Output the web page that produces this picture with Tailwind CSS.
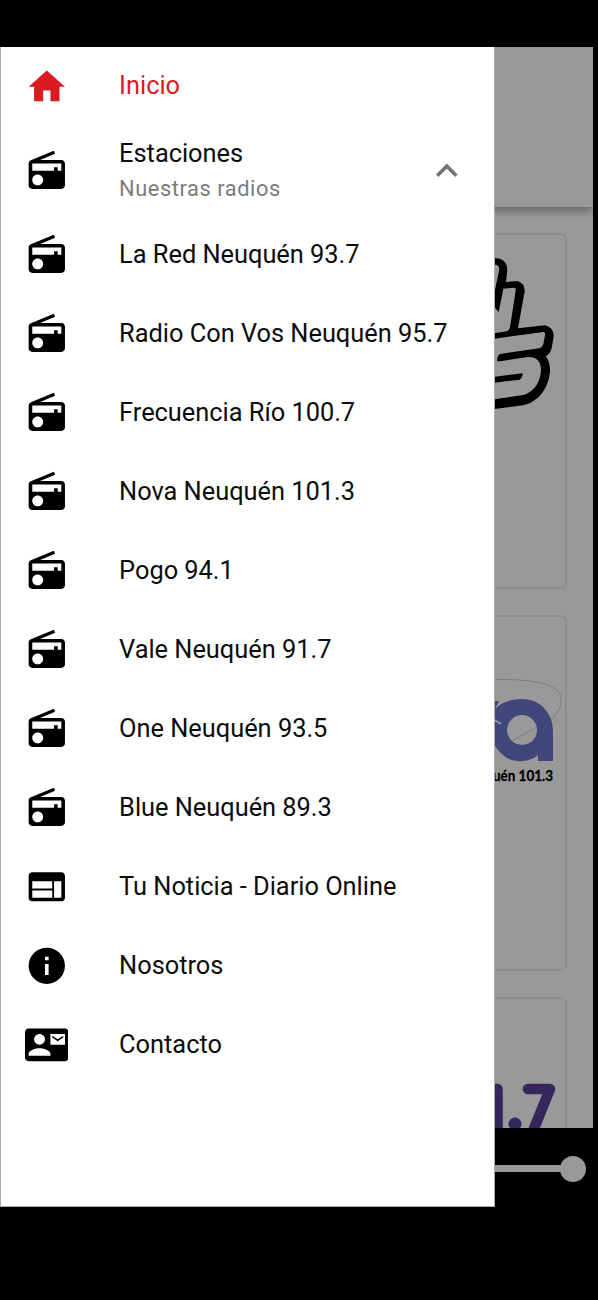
<!DOCTYPE html>
<html lang="es">
<head>
<meta charset="utf-8">
<meta name="viewport" content="width=device-width, initial-scale=1">
<title>Radios</title>
<script src="https://cdn.jsdelivr.net/npm/@tailwindcss/browser@4"></script>
</head>
<body class="bg-black">
<svg class="hidden">
  <symbol id="radio" viewBox="0 0 24 24"><path d="M3.24 6.15C2.51 6.43 2 7.17 2 8v12c0 1.1.89 2 2 2h16c1.11 0 2-.9 2-2V8c0-1.11-.89-2-2-2H8.3l8.26-3.34L15.88 1 3.24 6.15zM7 20c-1.66 0-3-1.34-3-3s1.34-3 3-3 3 1.34 3 3-1.34 3-3 3zm13-8h-2v-2h-2v2H4V8h16v4z"/></symbol>
</svg>
<div class="relative flex h-[1300px] w-[598px] flex-col overflow-hidden bg-black pt-[47px] font-['Roboto',sans-serif]">
  <!-- Dimmed page behind the drawer -->
  <main class="h-[1081px] w-[593px] overflow-hidden bg-[#999]">
    <header class="relative h-[160px] bg-[#999] shadow-[0_3px_10px_rgba(0,0,0,0.4)]"></header>
    <div class="flex flex-col gap-[26px] pt-[26px] pr-[26px] pl-[26px]">
      <section class="flex h-[356px] justify-end rounded-[6px] border-2 border-[#8d8d8d]">
        <svg class="mt-[21px] h-[160px] w-[82px]" viewBox="15 108 246 480">
          <path fill-rule="evenodd" d="M10 114H50L66 116Q88 124 88 150L84 186L118 183Q141 190 140 214L120 325L200 316Q228 322 227 350L221 385Q216 402 203 409Q216 425 216 450C214 500 185 545 135 556L10 572ZM10 134H55Q66 138 63 152L50 215L10 300ZM76 206L110 203Q114 205 113 212L96 322Q94 332 86 334L40 341V250L62 276ZM10 360L50 356L196 336Q203 337 201 345L196 372Q193 382 184 385L66 402Q58 404 57 424L66 424L150 411Q188 410 189 450Q186 505 140 524L10 544V490L50 488L125 479Q134 474 134 460L50 470L10 476Z"/>
        </svg>
      </section>
      <section class="flex h-[356px] justify-end rounded-[6px] border-2 border-[#8d8d8d]">
        <svg class="mt-[58px] h-[120px] w-[82px]" viewBox="483 675 82 120">
          <path d="M480 680c48-2 72 2 80 14 4 12-3 20-10 27" fill="none" stroke="#7d7d7d" stroke-width="1"/>
          <path fill="#40457a" fill-rule="evenodd" d="M484 701h15l-4 8q10-10 27-10c19 0 31 15 31 32v30h-15v-6c-8 7-21 8-31 3-9-6-15-14-16-27h-7zM522 715a15 15 0 1 0 0 30 15 15 0 0 0 0-30z"/>
          <path d="M493 719l8 5" stroke="#999" stroke-width="2"/>
          <path d="M512 741l23-13" stroke="#7d7d7d"/>
          <text x="553" y="780.5" text-anchor="end" textLength="60" lengthAdjust="spacingAndGlyphs" font-family="Lato, sans-serif" font-weight="700" font-size="15" stroke="#000" stroke-width=".3">uén 101.3</text>
        </svg>
      </section>
      <section class="flex h-[356px] justify-end rounded-[6px] border-2 border-[#8d8d8d]">
        <svg class="mt-[75px] h-[70px] w-[82px]" viewBox="483 1074 82 70" fill="none" stroke="#35265c" stroke-width="10.5" stroke-linecap="round" stroke-linejoin="round">
          <path d="M490 1089h7.500v50M528 1089h22l-17 42"/>
          <circle cx="515" cy="1124" r="6.500" fill="#35265c" stroke="none"/>
        </svg>
      </section>
    </div>
  </main>
  <!-- Player volume slider -->
  <footer class="flex h-[81px] items-center justify-end bg-black pr-[12px]">
    <div class="h-[7px] w-[120px] bg-[#999]"></div>
    <div class="-ml-[8px] size-[26px] rounded-full bg-[#999]"></div>
  </footer>

  <!-- Navigation drawer -->
  <nav class="absolute top-[47px] left-0 h-[1160px] w-[495px] border-r border-b border-l border-[#aaa] bg-white text-[25.4px] tracking-[-0.02px] text-[#0c0c0c]">
    <a class="flex h-[79px] items-center pl-[23.5px] text-[#db1b22]">
      <svg class="size-[43.6px] fill-current" viewBox="0 0 24 24"><path d="M10 20v-6h4v6h5v-8h3L12 3 2 12h3v8z"/></svg>
      <span class="ml-[51px] pb-[2px]">Inicio</span>
    </a>
    <div class="flex h-[89px] items-center pl-[23.5px]">
      <svg class="size-[43.6px] fill-black"><use href="#radio"/></svg>
      <div class="ml-[51px] flex w-[306px] flex-col">
        <span class="leading-[35px]">Estaciones</span>
        <span class="text-[21.8px] leading-[35px] tracking-[0.57px] text-[#7c7c7c]">Nuestras radios</span>
      </div>
      <svg class="size-[43.6px] fill-[#757575]" viewBox="0 0 24 24"><path d="M12 8l-6 6 1.41 1.41L12 10.83l4.59 4.58L18 14z"/></svg>
    </div>
    <a class="flex h-[79.05px] items-center pl-[23.5px]"><svg class="size-[43.6px] fill-black"><use href="#radio"/></svg><span class="ml-[51px] pb-px">La Red Neuquén 93.7</span></a>
    <a class="flex h-[79.05px] items-center pl-[23.5px]"><svg class="size-[43.6px] fill-black"><use href="#radio"/></svg><span class="ml-[51px] pb-px">Radio Con Vos Neuquén 95.7</span></a>
    <a class="flex h-[79.05px] items-center pl-[23.5px]"><svg class="size-[43.6px] fill-black"><use href="#radio"/></svg><span class="ml-[51px] pb-px">Frecuencia Río 100.7</span></a>
    <a class="flex h-[79.05px] items-center pl-[23.5px]"><svg class="size-[43.6px] fill-black"><use href="#radio"/></svg><span class="ml-[51px] pb-px">Nova Neuquén 101.3</span></a>
    <a class="flex h-[79.05px] items-center pl-[23.5px]"><svg class="size-[43.6px] fill-black"><use href="#radio"/></svg><span class="ml-[51px] pb-px">Pogo 94.1</span></a>
    <a class="flex h-[79.05px] items-center pl-[23.5px]"><svg class="size-[43.6px] fill-black"><use href="#radio"/></svg><span class="ml-[51px] pb-px">Vale Neuquén 91.7</span></a>
    <a class="flex h-[79.05px] items-center pl-[23.5px]"><svg class="size-[43.6px] fill-black"><use href="#radio"/></svg><span class="ml-[51px] pb-px">One Neuquén 93.5</span></a>
    <a class="flex h-[79.05px] items-center pl-[23.5px]"><svg class="size-[43.6px] fill-black"><use href="#radio"/></svg><span class="ml-[51px] pb-px">Blue Neuquén 89.3</span></a>
    <a class="flex h-[79.05px] items-center pl-[23.5px]"><svg class="size-[43.6px] fill-black" viewBox="0 0 24 24"><path d="M20 4H4c-1.1 0-1.99.9-1.99 2L2 18c0 1.1.9 2 2 2h16c1.1 0 2-.9 2-2V6c0-1.1-.9-2-2-2zm-5 14H4v-4h11v4zm0-5H4V9h11v4zm5 5h-4V9h4v9z"/></svg><span class="ml-[51px] pb-px">Tu Noticia - Diario Online</span></a>
    <a class="flex h-[79.05px] items-center pl-[23.5px]"><svg class="size-[43.6px] fill-black" viewBox="0 0 24 24"><path d="M12 2C6.48 2 2 6.48 2 12s4.48 10 10 10 10-4.48 10-10S17.52 2 12 2zm1 15h-2v-6h2v6zm0-8h-2V7h2v2z"/></svg><span class="ml-[51px] pb-px">Nosotros</span></a>
    <a class="flex h-[79.05px] items-center pl-[23.5px]"><svg class="size-[43.6px] fill-black" viewBox="0 0 24 24"><path d="M21 8V7l-3 2-3-2v1l3 2 3-2zm1-5H2C.9 3 0 3.9 0 5v14c0 1.1.9 2 2 2h20c1.1 0 1.99-.9 1.99-2L24 5c0-1.1-.9-2-2-2zM8 6c1.66 0 3 1.34 3 3s-1.34 3-3 3-3-1.34-3-3 1.34-3 3-3zm6 12H2v-1c0-2 4-3.1 6-3.1s6 1.1 6 3.1v1zm8-6h-8V6h8v6z"/></svg><span class="ml-[51px] pb-px">Contacto</span></a>
  </nav>
</div>
</body>
</html>
